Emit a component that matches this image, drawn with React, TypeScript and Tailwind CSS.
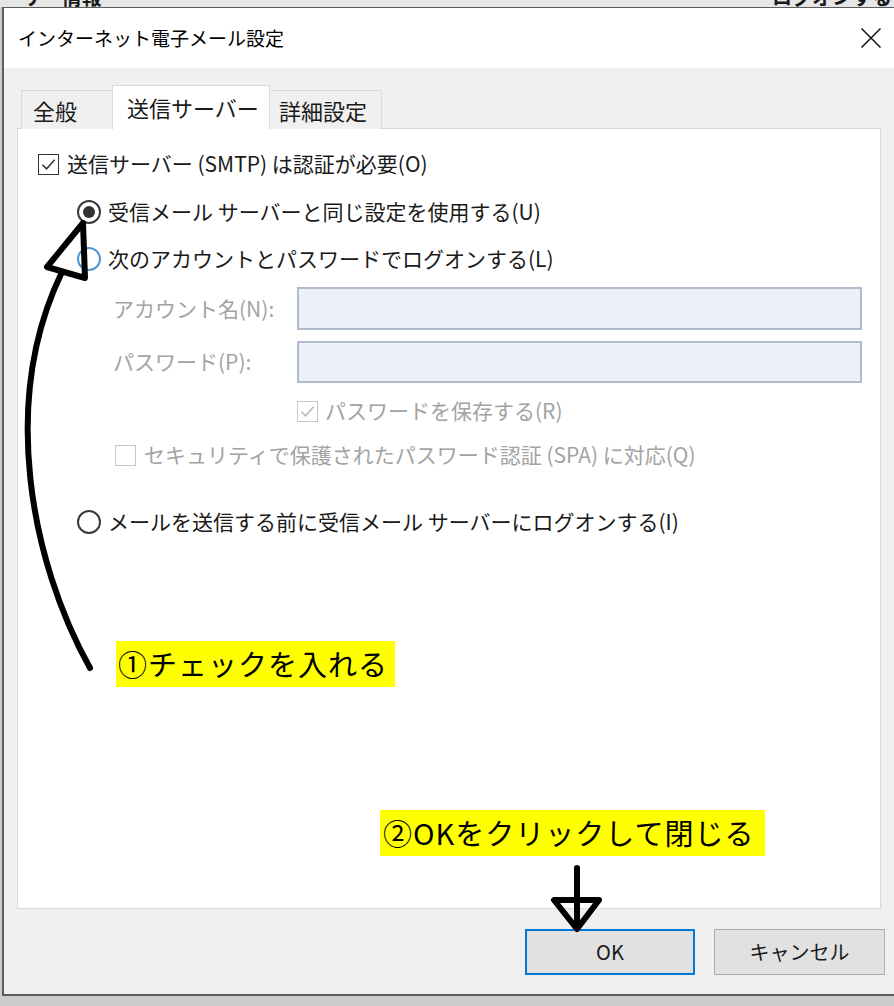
import React from "react";

type BoxProps = { checked?: boolean; disabled?: boolean };

const CheckBox = ({ checked, disabled }: BoxProps) => (
  <span
    className={`w-[21px] h-[21px] shrink-0 border flex items-center justify-center bg-white ${
      disabled ? "border-[#c6c6c6]" : "border-[#333333]"
    }`}
  >
    {checked && (
      <svg width="17" height="17" viewBox="0 0 17 17">
        <path
          d="M2.5 8.8 L6.6 12.8 L14.6 3.8"
          fill="none"
          stroke={disabled ? "#b8b8b8" : "#333333"}
          strokeWidth="1.5"
        />
      </svg>
    )}
  </span>
);

const Radio = ({ checked, focus }: { checked?: boolean; focus?: boolean }) => (
  <span
    className={`w-[24px] h-[24px] shrink-0 rounded-full border-2 flex items-center justify-center bg-white ${
      focus ? "border-[#4f95d6]" : "border-[#3a3a3a]"
    }`}
  >
    {checked && <span className="w-[12px] h-[12px] rounded-full bg-[#333333]" />}
  </span>
);

const Row = ({ className, children }: { className: string; children: React.ReactNode }) => (
  <div className={`h-[30px] flex items-center ${className}`}>{children}</div>
);

export default function App() {
  return (
    <div className="relative w-[894px] h-[1006px] overflow-hidden bg-[#cdcdcd] font-['Noto_Sans_CJK_JP',sans-serif] text-[#1a1a1a]">
      {/* window behind the dialog */}
      <div className="h-[7px] overflow-hidden bg-[#e6e6e6] flex justify-between px-[2px]">
        <span className="text-[20px] leading-[20px] -mt-[13px] font-bold">ーサー情報</span>
        <span className="text-[20px] leading-[20px] -mt-[13px] font-bold">ログオンする</span>
      </div>

      <div className="ml-[2px] h-[989px] border-t border-l-2 border-b-2 border-[#5c5c5c] flex flex-col bg-[#f0f0f0]">
        {/* title bar */}
        <div className="h-[60px] bg-white flex items-center justify-between pl-[14px] pr-[12px]">
          <span className="text-[19px] text-black">インターネット電子メール設定</span>
          <svg width="22" height="22" viewBox="0 0 22 22">
            <path d="M1.5 1.5 L20.5 20.5 M20.5 1.5 L1.5 20.5" stroke="#111" strokeWidth="1.5" />
          </svg>
        </div>

        <div className="flex-1 pl-[13px] pt-[17px]">
          {/* tabs */}
          <div className="flex items-end pl-[4px] h-[44px] relative z-10 -mb-px">
            <div className="w-[92px] h-[39px] border border-b-0 border-[#d9d9d9] bg-[#f0f0f0] flex items-center pl-[11px] text-[22px]">
              全般
            </div>
            <div className="w-[158px] h-[44px] border border-b-0 border-[#d9d9d9] bg-white flex items-center pl-[14px] text-[22px] -ml-px">
              送信サーバー
            </div>
            <div className="w-[113px] h-[39px] border border-b-0 border-[#d9d9d9] bg-[#f0f0f0] flex items-center pl-[9px] text-[22px] -ml-px">
              詳細設定
            </div>
          </div>

          {/* panel */}
          <div className="w-[864px] h-[781px] border border-[#d9d9d9] bg-white pt-[20px] text-[21px]">
            <Row className="pl-[20px] gap-[8px]">
              <CheckBox checked />
              <span>送信サーバー (SMTP) は認証が必要(O)</span>
            </Row>
            <Row className="mt-[18px] pl-[59px] gap-[7px]">
              <Radio checked />
              <span>受信メール サーバーと同じ設定を使用する(U)</span>
            </Row>
            <Row className="mt-[17px] pl-[59px] gap-[7px]">
              <Radio focus />
              <span>次のアカウントとパスワードでログオンする(L)</span>
            </Row>

            <div className="mt-[13px] h-[43px] flex items-center pl-[95px] text-[#a3a3a3]">
              <span className="w-[184px]">アカウント名(N):</span>
              <div className="w-[565px] h-full border-2 border-[#b1bbce] bg-[#eef0f7]" />
            </div>
            <div className="mt-[11px] h-[42px] flex items-center pl-[95px] text-[#a3a3a3]">
              <span className="w-[184px]">パスワード(P):</span>
              <div className="w-[565px] h-full border-2 border-[#b1bbce] bg-[#eef0f7]" />
            </div>

            <Row className="mt-[13px] pl-[279px] gap-[7px] text-[#a3a3a3]">
              <CheckBox checked disabled />
              <span>パスワードを保存する(R)</span>
            </Row>
            <Row className="mt-[14px] pl-[97px] gap-[8px] text-[#a3a3a3]">
              <CheckBox disabled />
              <span>セキュリティで保護されたパスワード認証 (SPA) に対応(Q)</span>
            </Row>
            <Row className="mt-[37px] pl-[59px] gap-[7px]">
              <Radio />
              <span>メールを送信する前に受信メール サーバーにログオンする(I)</span>
            </Row>

            <div className="mt-[104px] ml-[98px] w-[279px] h-[46px] bg-[#ffff00] flex items-center pl-[2px] text-[29px] tracking-[1px] text-black">
              ①チェックを入れる
            </div>
            <div className="mt-[123px] ml-[362px] w-[385px] h-[46px] bg-[#ffff00] flex items-center pl-[3px] text-[29px] tracking-[1px] text-black">
              ②OKをクリックして閉じる
            </div>
          </div>

          {/* buttons */}
          <div className="mt-[20px] ml-[508px] flex gap-[19px]">
            <button className="w-[170px] h-[46px] border-2 border-[#0078d7] bg-[#e1e1e1] text-[20px]">OK</button>
            <button className="w-[171px] h-[46px] border border-[#adadad] bg-[#e1e1e1] text-[20px]">キャンセル</button>
          </div>
        </div>
      </div>

      {/* hand-drawn annotation arrows */}
      <svg className="absolute inset-0 pointer-events-none" width="894" height="1006" viewBox="0 0 894 1006">
        <path d="M90 668 C30 560, 0 400, 62 272" fill="none" stroke="#000" strokeWidth="6" strokeLinecap="round" />
        <polygon points="83,223 47,267 85,278" fill="none" stroke="#000" strokeWidth="6" strokeLinejoin="round" />
        <path d="M577 868 L577 926" fill="none" stroke="#000" strokeWidth="6" strokeLinecap="round" />
        <polygon points="554,900 599,900 577,929" fill="none" stroke="#000" strokeWidth="6" strokeLinejoin="round" />
      </svg>
    </div>
  );
}
